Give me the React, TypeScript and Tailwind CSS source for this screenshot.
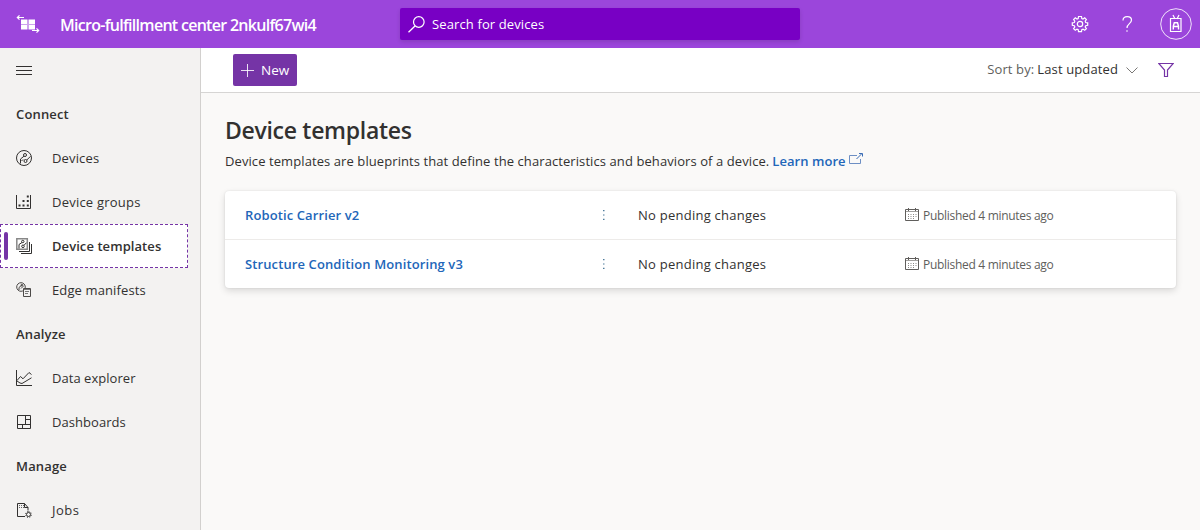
import type { ReactNode } from "react";

function Icon({ size = 16, className = "", children }: { size?: number; className?: string; children: ReactNode }) {
  return (
    <svg width={size} height={size} viewBox={`0 0 ${size} ${size}`} fill="none" stroke="currentColor" strokeWidth="1" className={`shrink-0 ${className}`}>
      {children}
    </svg>
  );
}

function AppLogo() {
  return (
    <svg width="24" height="20" viewBox="0 0 24 20" fill="none" stroke="#fff" strokeWidth="1.2" className="shrink-0">
      <path d="M1.500 3.500H8M3.500 1.300 1.300 3.500l2.200 2.200" />
      <path d="M16 16.500h6.500M20.500 14.300l2.200 2.200-2.200 2.200" />
      <g fill="#fff" stroke="none">
        <path d="M5 5.500h6.500V10H5zM12.500 5.500H19V10h-6.500zM5 11h6.500v4.500H5zM12.500 11H19v4.500h-6.500z" />
        <path fillOpacity=".5" d="M5 10h14v1H5z" />
      </g>
    </svg>
  );
}

const DevicesIcon = () => (
  <Icon className="text-[#323130]">
    <circle cx="8" cy="8" r="7.500" />
    <circle cx="9" cy="5" r="1.500" />
    <circle cx="9.500" cy="11" r="1.500" />
    <path d="M8 6.200 4.500 9v4.500M10.800 10l3.700-3.700M7 9.500 5.500 11" />
  </Icon>
);

const GroupsIcon = () => (
  <Icon className="text-[#323130]">
    <path d="M.5 1v13.500h14V1" />
    <path fill="currentColor" stroke="none" d="M2.500 10.500h2v2h-2zM6.500 10.500h2v2h-2zM10.800 10.500h2v2h-2zM6.500 6h2v2h-2zM10.800 6h2v2h-2zM10.800 1.500h2v2h-2z" />
  </Icon>
);

const TemplatesIcon = () => (
  <Icon className="text-[#323130]">
    <path stroke="#888" strokeWidth="1.500" d="M.8.8h10.500v10.500H.8z" />
    <path d="M13.500 4v9.500H3M15.500 6v9.500H5" />
    <circle cx="6.800" cy="3.500" r="1.200" />
    <circle cx="7" cy="8.300" r="1.300" />
    <path d="M6 4.500 3 6.500v4M8 7.300l2.500-2.600" />
  </Icon>
);

const ManifestIcon = () => (
  <Icon className="text-[#4c4a48]">
    <circle cx="5" cy="5" r="4.300" />
    <path d="M3 8V5.500l3.500-3M5 6.500l3-3" />
    <circle cx="5.800" cy="3.200" r=".8" />
    <path fill="#f3f2f1" d="M7.500 6.500h7v8h-7z" />
    <path stroke="#777" d="M8 7.500h6M9 9.500h4M9 11.500h3" />
  </Icon>
);

const ExplorerIcon = () => (
  <Icon className="text-[#323130]">
    <path d="M.5 0v15.500H16" />
    <path d="m1 10.500 3.500-4L7 8.800 13 2.500l2.500 2" />
    <path d="m1 11 3 2 2 .5 9.500-5.700" />
  </Icon>
);

const DashboardIcon = () => (
  <Icon className="text-[#323130]">
    <path d="M1.500 1.500h13v13h-13zM9.500 1.500v9M1.500 10.500h13M9.500 5.500h5M6.500 10.500v4" />
  </Icon>
);

const JobsIcon = () => (
  <Icon className="text-[#323130]">
    <path d="M9 14.500H1.500V1.500h7l3.500 4v3M8.500 1.500v4H12" />
    <path stroke="#666" strokeDasharray="1 1" d="M3 3.500h5M3 5.500h5" />
    <circle cx="12.500" cy="12.500" r="2" />
    <path strokeDasharray="1 1.360" d="M12.500 9.500a3 3 0 1 1-.01 0" />
  </Icon>
);

const CalendarIcon = () => (
  <svg width="14" height="14" viewBox="0 0 14 14" fill="none" stroke="#605e5c" className="shrink-0">
    <path d="M.5 1.500h13v11H.5z" />
    <path d="M1 3.500h12" stroke="#a19f9d" />
    <path d="M3.500 0v3M10.500 0v3" />
    <path stroke="#8a8886" strokeDasharray="1 1.500" d="M3 6.500h8.500M3 8.500h8.500M3 10.500h6" />
  </svg>
);

function Heading({ children }: { children: ReactNode }) {
  return <div className="flex h-11 items-center pt-0.5 pl-4 text-[13px] font-semibold tracking-[0.15px]">{children}</div>;
}

function NavItem({ icon, label, className }: { icon: ReactNode; label: string; className: string }) {
  return (
    <a className="flex h-11 items-center pl-4">
      {icon}
      <span className={`ml-5 pt-0.5 text-[13px] ${className}`}>{label}</span>
    </a>
  );
}

function TemplateRow({ name }: { name: string }) {
  return (
    <div className="flex h-12 items-center pl-5 text-[13px]">
      <div className="w-[356px] pt-px">
        <a className="font-semibold tracking-[0.11px] text-[#2266b9]">{name}</a>
      </div>
      <svg width="5" height="12" viewBox="0 0 5 12" fill="#4f7c9c" className="shrink-0">
        <path d="M2 1h1.500v1.200H2zM2 5.400h1.500v1.200H2zM2 9.800h1.500V11H2z" />
      </svg>
      <span className="ml-8 w-[267px] pt-px tracking-[0.25px]">No pending changes</span>
      <CalendarIcon />
      <span className="ml-[4px] pt-px text-[12px] tracking-[-0.3px] text-[#605e5c]">Published 4 minutes ago</span>
    </div>
  );
}

export default function App() {
  return (
    <div className="flex h-[530px] w-[1200px] flex-col overflow-hidden bg-[#faf9f8] font-['Open_Sans','Noto_Sans',sans-serif] whitespace-nowrap text-[#323130]">
      <header className="flex h-12 shrink-0 items-center bg-[#9b46db] pl-4 text-white">
        <AppLogo />
        <h1 className="ml-5 w-[340px] pt-0.5 text-[16px] font-semibold tracking-[-0.71px]">Micro-fulfillment center 2nkulf67wi4</h1>
        <div className="flex h-8 w-[400px] items-center rounded-[2px] bg-[#7800c4] pl-2 shadow-[0_2px_4px_rgba(0,0,0,0.13)]">
          <Icon size={17}>
            <circle cx="10.800" cy="6" r="5.300" strokeWidth="1.200" />
            <path d="M7 10 .500 16.300" strokeWidth="1.300" />
          </Icon>
          <span className="ml-[7px] pt-0.5 text-[13px] tracking-[0.12px]">Search for devices</span>
        </div>
        <div className="ml-auto flex items-center">
          <Icon size={18}>
            <circle cx="9" cy="9" r="2.700" strokeWidth="1.200" />
            <path strokeWidth="1.200" d="M7.500 1.500h3l.3 2 1.200.5 1.700-1.200 1.700 1.800L14.200 6.200l.5 1.300 2 .3v2.500l-2 .4-.5 1.200 1.200 1.700-1.700 1.700L12 14.100l-1.200.5-.3 2h-3l-.3-2-1.200-.5-1.700 1.200-1.700-1.700 1.200-1.700-.5-1.200-2-.4V7.800l2-.3.500-1.300-1.200-1.600 1.700-1.800L6 4l1.200-.5z" />
          </Icon>
          <Icon size={18} className="ml-[29px]">
            <path strokeWidth="1.200" d="M5 5.500C5 2.800 6.700 1.600 9.300 1.600c2.500 0 4.200 1.300 4.200 3.500 0 3.700-4.500 3.500-4.500 7.900" />
            <circle cx="9" cy="16" r=".8" fill="currentColor" stroke="none" />
          </Icon>
          <Icon size={32} className="mr-2 ml-6">
            <circle cx="16" cy="16" r="15.300" strokeOpacity=".85" />
            <path strokeWidth="1.200" d="M10.500 10.500h10.500v13H10.500zM13 7l2 4M19 7l-2 4M14 10.500h4" />
            <path strokeWidth="1.400" d="M13.300 21.500v-3.300l1-3.500h3.200l1 3.500v3.300M13.500 18.500h5" />
          </Icon>
        </div>
      </header>
      <div className="flex min-h-0 flex-1">
        <nav className="w-[201px] shrink-0 border-r border-[#d2d0ce] bg-[#f3f2f1]">
          <div className="flex h-11 items-center pl-4">
            <Icon>
              <path d="M0 4.500h16M0 8.500h16M0 12.500h16" />
            </Icon>
          </div>
          <Heading>Connect</Heading>
          <NavItem icon={<DevicesIcon />} label="Devices" className="tracking-[0.15px]" />
          <NavItem icon={<GroupsIcon />} label="Device groups" className="tracking-[0.22px]" />
          <a className="flex h-11 w-[188px] items-center border border-dashed border-[#7534a6] bg-white pl-[3px]">
            <span className="h-7 w-1 rounded-[2px] bg-[#7534a6]" />
            <span className="ml-2">
              <TemplatesIcon />
            </span>
            <span className="ml-5 pt-0.5 text-[13px] font-semibold tracking-[0.07px]">Device templates</span>
          </a>
          <NavItem icon={<ManifestIcon />} label="Edge manifests" className="tracking-[0.12px]" />
          <Heading>Analyze</Heading>
          <NavItem icon={<ExplorerIcon />} label="Data explorer" className="tracking-[0.04px]" />
          <NavItem icon={<DashboardIcon />} label="Dashboards" className="tracking-[0.05px]" />
          <Heading>Manage</Heading>
          <NavItem icon={<JobsIcon />} label="Jobs" className="tracking-[0.5px]" />
        </nav>
        <main className="flex-1">
          <div className="flex h-[45px] items-center border-b border-[#d6d5d4] bg-white pr-[26px] pl-8 text-[13px]">
            <button className="flex h-8 w-16 items-center rounded-[2px] bg-[#7534a6] pl-2 text-white">
              <Icon size={13}>
                <path d="M0 6.500h13M6.500 0v13" strokeOpacity=".85" />
              </Icon>
              <span className="ml-[7px] text-[13.500px]">New</span>
            </button>
            <div className="ml-auto flex items-center">
              <span className="tracking-[0.12px] text-[#605e5c]">Sort by:</span>
              <span className="ml-[3px] tracking-[0.12px]">Last updated</span>
              <Icon size={12} className="ml-2 text-[#797775]">
                <path d="m.5 3.500 5.500 5.500 5.500-5.500" />
              </Icon>
              <Icon size={16} className="ml-5 text-[#7534a6]">
                <path strokeWidth="1.200" d="M.8 1.500h14.400L9.500 8v6.500h-3V8z" />
              </Icon>
            </div>
          </div>
          <div className="px-6">
            <h2 className="mt-[21px] h-8 text-[23px] leading-8 font-semibold tracking-[-0.3px]">Device templates</h2>
            <p className="mt-[5px] flex h-5 items-center text-[13px]">
              <span className="pt-0.5 tracking-[0.085px]">Device templates are blueprints that define the characteristics and behaviors of a device.</span>
              <a className="ml-[3px] pt-0.5 font-semibold tracking-[0.05px] text-[#2266b9]">Learn more</a>
              <svg width="14" height="12" viewBox="0 0 14 12" fill="none" stroke="#6d8fc4" className="mb-1 ml-[3px]">
                <path d="M8 2.500H.5v8h11V6" />
                <path d="m7.500 6 5-5M10 .500h3.500v3" stroke="#3a6cb5" />
              </svg>
            </p>
            <section className="mt-[20px] divide-y divide-[#edebe9] rounded-[4px] bg-white shadow-[0_3px_7px_rgba(0,0,0,0.13),0_0_2px_rgba(0,0,0,0.11)]">
              <div className="h-[49px]">
                <TemplateRow name="Robotic Carrier v2" />
              </div>
              <div className="h-12">
                <TemplateRow name="Structure Condition Monitoring v3" />
              </div>
            </section>
          </div>
        </main>
      </div>
    </div>
  );
}
